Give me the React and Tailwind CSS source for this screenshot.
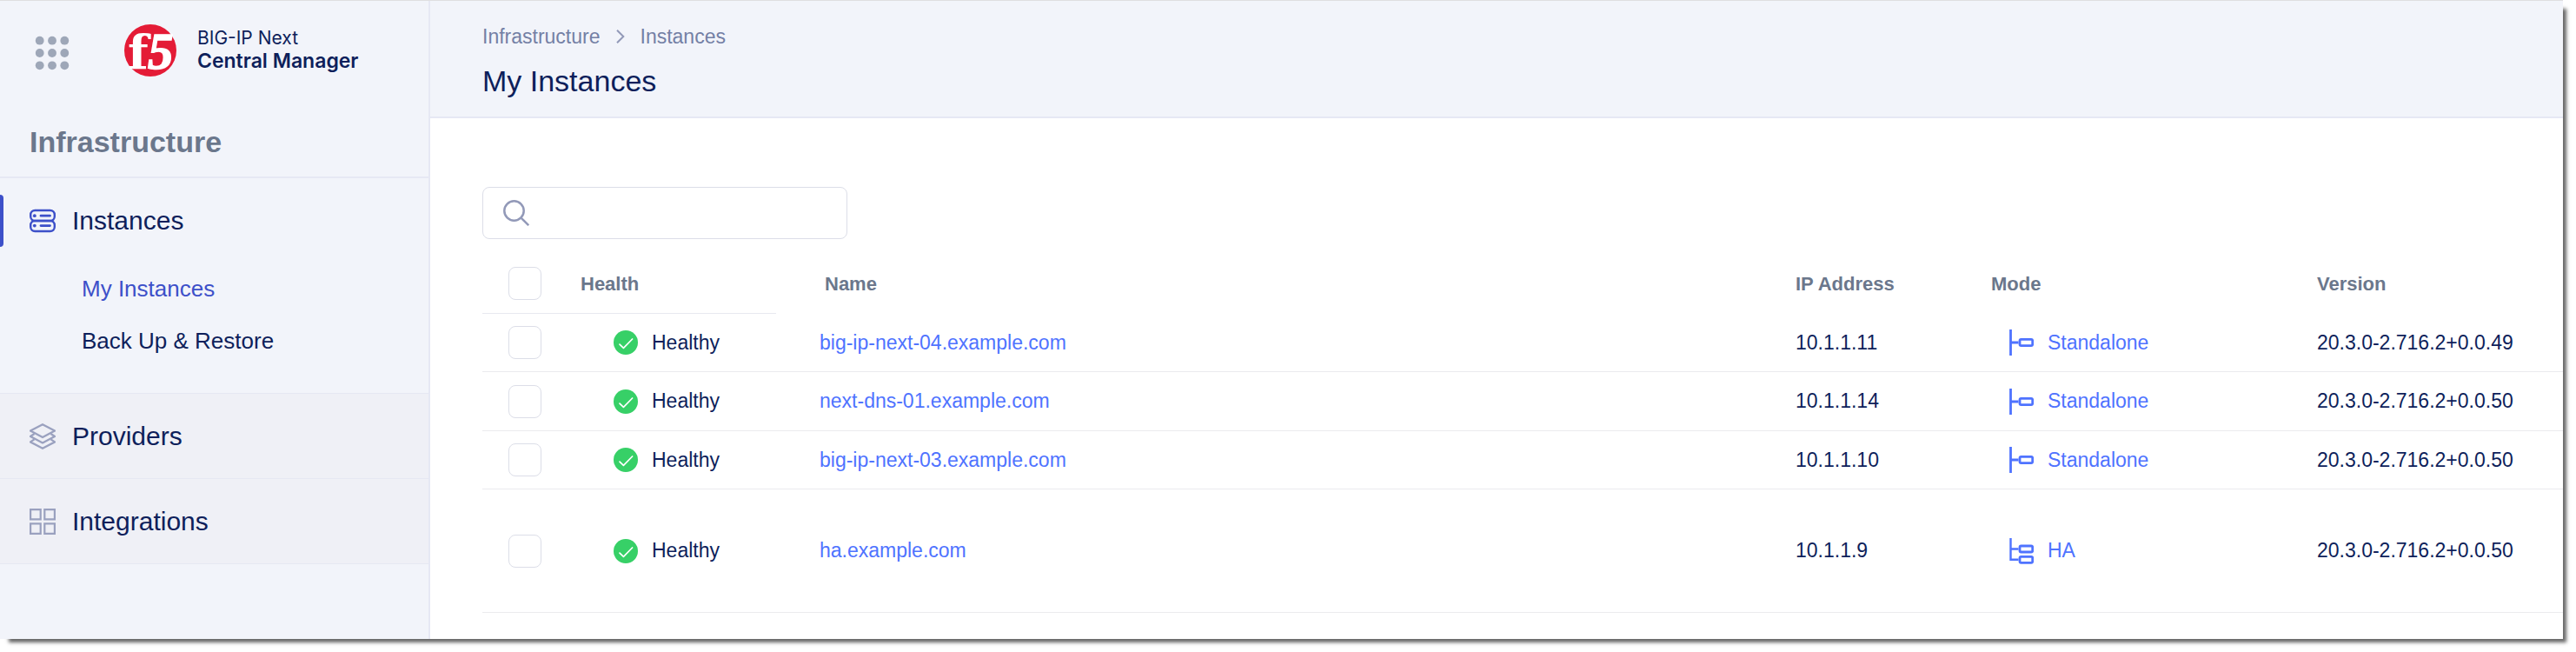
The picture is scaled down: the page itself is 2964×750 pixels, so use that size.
const instances = [
  { name: "big-ip-next-04.example.com", ip: "10.1.1.11", mode: "Standalone", version: "20.3.0-2.716.2+0.0.49" },
  { name: "next-dns-01.example.com", ip: "10.1.1.14", mode: "Standalone", version: "20.3.0-2.716.2+0.0.50" },
  { name: "big-ip-next-03.example.com", ip: "10.1.1.10", mode: "Standalone", version: "20.3.0-2.716.2+0.0.50" },
  { name: "ha.example.com", ip: "10.1.1.9", mode: "HA", version: "20.3.0-2.716.2+0.0.50" },
];

function AppsIcon() {
  return (
    <svg width="40" height="40" viewBox="0 0 40 40" fill="#9ea7b8" aria-hidden="true">
      {[5.7, 20, 34.3].map((y) => [5.7, 20, 34.3].map((x) => <circle key={`${x}-${y}`} cx={x} cy={y} r="4.9" />))}
    </svg>
  );
}

function F5Logo() {
  return (
    <svg className="overflow-visible" width="60" height="60" viewBox="0 0 60 60" aria-hidden="true">
      <circle cx="30" cy="30" r="30" fill="#e41b36" />
      <g fill="#fff" stroke="#fff">
        <text x="4" y="51" fontFamily="DejaVu Serif, serif" fontSize="55" fontWeight="700" strokeWidth="0">
          f
        </text>
        <text x="27" y="51" fontFamily="Liberation Serif, serif" fontSize="59" fontWeight="700" fontStyle="italic" strokeWidth="1.5">
          5
        </text>
      </g>
    </svg>
  );
}

function ServersIcon() {
  return (
    <svg width="30" height="30" viewBox="0 0 30 30" fill="none" stroke="#3d50c9" strokeWidth="2.4" aria-hidden="true">
      <rect x="1.2" y="3" width="27.6" height="12" rx="5" />
      <rect x="1.2" y="15" width="27.6" height="12" rx="5" />
      <path d="M13 9.200h10.500M13 20.600h10.500" strokeWidth="2.800" strokeLinecap="round" />
      <circle cx="5.800" cy="9.200" r="1.900" fill="#3d50c9" stroke="none" />
      <circle cx="5.800" cy="20.600" r="1.900" fill="#3d50c9" stroke="none" />
    </svg>
  );
}

function LayersIcon() {
  return (
    <svg width="30" height="30" viewBox="0 0 30 30" fill="none" stroke="#9aa1bf" strokeWidth="2.300" strokeLinejoin="round" aria-hidden="true">
      <path d="M15 1.200 29 8.600 15 16 1 8.600Z" />
      <path d="M5.500 12 1 15l14 7.400L29 15l-4.500-3" />
      <path d="M5.500 18.400 1 21.400l14 7.400 14-7.400-4.500-3" />
    </svg>
  );
}

function GridIcon() {
  return (
    <svg width="30" height="30" viewBox="0 0 30 30" fill="none" stroke="#9aa1bf" strokeWidth="2.200" aria-hidden="true">
      <path d="M1.100 1.100h11.600v11.200H1.100ZM17.300 1.100h11.600v11.200H17.300ZM1.100 17.300h11.600v11.600H1.100ZM17.300 17.300h11.600v11.600H17.300Z" />
    </svg>
  );
}

function HealthIcon() {
  return (
    <svg width="28" height="28" viewBox="0 0 28 28" fill="none" aria-hidden="true">
      <circle cx="14" cy="14" r="14" fill="#37d067" />
      <path d="M7 16.200 11.400 20.300 21.600 10" stroke="#fff" strokeWidth="1.700" strokeLinecap="round" strokeLinejoin="round" />
    </svg>
  );
}

function ModeIcon({ mode }) {
  return (
    <svg width="28" height="30" viewBox="0 0 28 30" fill="none" stroke="#4f73ff" strokeWidth="2.800" aria-hidden="true">
      {mode === "HA" ? (
        <>
          <path d="M1.500 0v24.800h9M1.500 12.500h9" strokeWidth="2.400" />
          <rect x="12" y="9" width="14.700" height="7" rx="1.500" />
          <rect x="12" y="21.300" width="14.700" height="7" rx="1.500" />
        </>
      ) : (
        <>
          <path d="M1.500 0v30M1.500 15h9" />
          <rect x="12" y="11.400" width="14.700" height="7.200" rx="1.500" />
        </>
      )}
    </svg>
  );
}

function Checkbox({ label }) {
  return (
    <input
      type="checkbox"
      aria-label={label}
      className="block size-[38px] appearance-none rounded-lg border border-[#dcdee8] bg-white checked:bg-[#4f73ff]"
    />
  );
}

function NavItem({ icon, children }) {
  return (
    <a href="#" className="flex h-[98px] items-center gap-[19px] border-t border-[#e6e8f2] bg-[#eff0f6] pl-[34px] text-[30px]">
      {icon}
      <span>{children}</span>
    </a>
  );
}

function Sidebar() {
  return (
    <aside className="w-[495px] shrink-0 border-r-2 border-[#e6e8f4]">
      <div className="flex h-[119px] items-center pl-10">
        <button type="button" aria-label="Applications">
          <AppsIcon />
        </button>
        <a href="#" className="flex items-center pb-[6px] pl-[63px]">
          <F5Logo />
          <span className="flex flex-col pl-6 font-[Inter,sans-serif]">
            <span className="text-[21px] leading-6">BIG-IP Next</span>
            <span className="text-[23px] leading-[28px] font-semibold">Central Manager</span>
          </span>
        </a>
      </div>
      <h2 className="flex h-[85px] items-center border-b-2 border-[#e6e8f4] pt-1 pl-[34px] text-[34px] font-bold text-[#6b778c]">
        Infrastructure
      </h2>
      <nav className="border-b border-[#e6e8f2]">
        <div className="h-[247px] pt-[19px]">
          <a href="#" className="flex h-[60px] items-center text-[30px]">
            <span className="h-full w-1 rounded-r-sm bg-[#3d50c9]" />
            <span className="pl-[30px]">
              <ServersIcon />
            </span>
            <span className="pb-0.5 pl-[19px]">Instances</span>
          </a>
          <div className="flex flex-col pt-[18px] pl-[94px] text-[26px] leading-[60px]">
            <a href="#" className="text-[#3d50c9]">My Instances</a>
            <a href="#">Back Up &amp; Restore</a>
          </div>
        </div>
        <NavItem icon={<LayersIcon />}>Providers</NavItem>
        <NavItem icon={<GridIcon />}>Integrations</NavItem>
      </nav>
    </aside>
  );
}

function InstancesTable() {
  return (
    <table className="w-full table-fixed border-separate border-spacing-0 text-left">
      <colgroup>
        <col className="w-[83px]" />
        <col className="w-[255px]" />
        <col />
        <col className="w-[225px]" />
        <col className="w-[375px]" />
        <col className="w-[315px]" />
      </colgroup>
      <thead className="text-[22px] text-[#6b778c]">
        <tr className="h-[69px]">
          <th className="border-b border-[#e8e9f0] pl-[30px]">
            <Checkbox label="Select all instances" />
          </th>
          <th className="border-b border-[#e8e9f0] pl-[30px]">Health</th>
          <th className="pl-14">Name</th>
          <th className="pl-8">IP Address</th>
          <th className="pl-8">Mode</th>
          <th className="pl-8">Version</th>
        </tr>
      </thead>
      <tbody className="text-[23px] [&_td]:border-b [&_td]:border-[#ebebee]">
        {instances.map((row) => (
          <tr key={row.name} className={row.mode === "HA" ? "h-[142px]" : "h-[67px] even:h-[68px]"}>
            <td className="pl-[30px]">
              <Checkbox label={`Select ${row.name}`} />
            </td>
            <td className="pl-[68px]">
              <span className="flex items-center gap-4">
                <HealthIcon />
                <span>Healthy</span>
              </span>
            </td>
            <td className="pl-[50px]">
              <a href="#" className="text-[#4f73ff]">{row.name}</a>
            </td>
            <td className="pl-8">{row.ip}</td>
            <td className="pl-[53px]">
              <a href="#" className="flex items-center gap-4 text-[#4f73ff]">
                <ModeIcon mode={row.mode} />
                <span>{row.mode}</span>
              </a>
            </td>
            <td className="pl-8">{row.version}</td>
          </tr>
        ))}
      </tbody>
    </table>
  );
}

export default function App() {
  return (
    <div className="flex min-h-screen bg-white pr-[15px] pb-[15px] font-['Liberation_Sans',Arial,sans-serif] text-[#0e1f5b]">
      <div className="flex min-w-0 grow border-t border-[#dfdfe0] bg-[#f2f4fa] shadow-[7px_7px_4px_-3px_rgba(0,0,0,0.6)]">
        <Sidebar />
        <div className="flex min-w-0 grow flex-col">
          <header className="h-[135px] border-b-2 border-[#e6e8f4] pt-[25px] pl-[60px]">
            <nav aria-label="Breadcrumb" className="flex items-center text-[23px] leading-8 text-[#7480a5]">
              <a href="#">Infrastructure</a>
              <svg className="mx-[18px]" width="10" height="16" viewBox="0 0 10 16" fill="none" stroke="#9299b8" strokeWidth="2" aria-hidden="true">
                <path d="M1 .7 8.300 8 1 15.300" />
              </svg>
              <a href="#">Instances</a>
            </nav>
            <h1 className="pt-[15px] text-[34px] leading-10">My Instances</h1>
          </header>
          <main className="grow bg-white pt-[79px] pl-[60px]">
            <label className="flex h-[60px] w-[420px] items-center rounded-lg border border-[#dcdee8] px-[23px]">
              <svg width="30" height="30" viewBox="0 0 30 30" fill="none" stroke="#9299b8" strokeWidth="2.500" aria-hidden="true">
                <circle cx="12.500" cy="12.500" r="11.200" />
                <path d="m20.800 20.800 8.400 8.400" />
              </svg>
              <input type="search" aria-label="Search instances" className="ml-4 min-w-0 grow text-[23px] outline-none" />
            </label>
            <div className="pt-[17px]">
              <InstancesTable />
            </div>
          </main>
        </div>
      </div>
    </div>
  );
}
